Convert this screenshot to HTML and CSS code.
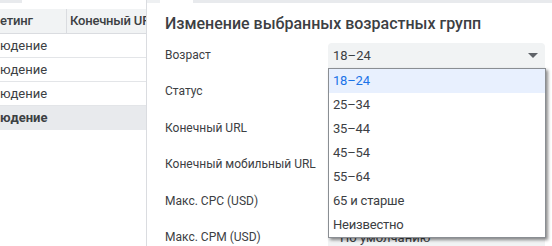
FILE: index.html
```html
<!DOCTYPE html>
<html lang="ru">
<head>
<meta charset="utf-8">
<link rel="stylesheet" href="styles.css">
</head>
<body>
<div class="app">
  <div class="left">
    <div class="left-top"><span class="left-tab"></span></div>
    <div class="table">
      <div class="row head">
        <div class="cell c1">етинг</div>
        <div class="cell c2">Конечный URL</div>
      </div>
      <div class="row"><div class="cell c1">юдение</div><div class="cell c2"></div></div>
      <div class="row"><div class="cell c1">юдение</div><div class="cell c2"></div></div>
      <div class="row"><div class="cell c1">юдение</div><div class="cell c2"></div></div>
      <div class="row sel"><div class="cell c1">юдение</div><div class="cell c2"></div></div>
    </div>
  </div>
  <div class="right">
    <div class="tabs"><span class="t1"></span><span class="t2"></span><span class="t3"></span></div>
    <div class="content">
      <h2 class="title">Изменение выбранных возрастных групп</h2>
      <div class="form">
        <div class="label">Возраст</div>
        <div class="field select">
          <span>18–24</span>
          <svg class="arrow" width="10" height="5" viewBox="0 0 10 5"><path d="M0 0h10L5 5z" fill="#5f6368"/></svg>
          <ul class="menu">
            <li class="active">18–24</li>
            <li>25–34</li>
            <li>35–44</li>
            <li>45–54</li>
            <li>55–64</li>
            <li>65 и старше</li>
            <li>Неизвестно</li>
          </ul>
        </div>
        <div class="label">Статус</div>
        <div class="field select"></div>
        <div class="label">Конечный URL</div>
        <div class="field input"></div>
        <div class="label">Конечный мобильный URL</div>
        <div class="field input"></div>
        <div class="label">Макс. CPC (USD)</div>
        <div class="field select"></div>
        <div class="label">Макс. CPM (USD)</div>
        <div class="field select"><span class="pad">По умолчанию</span></div>
      </div>
    </div>
  </div>
</div>
</body>
</html>
```

FILE: styles.css
```css
* { box-sizing: border-box; }
html, body {
  margin: 0;
  padding: 0;
  width: 552px;
  height: 246px;
  overflow: hidden;
  background: #fff;
  font-family: Roboto, "Liberation Sans", Arial, sans-serif;
  color: #3c4043;
}
.app {
  display: flex;
  height: 246px;
}
.left {
  width: 147px;
  flex: none;
  border-right: 1px solid #dadce0;
  overflow: hidden;
}
.left-top {
  height: 9px;
}
.left-tab {
  display: block;
  width: 22px;
  height: 3px;
  background: #e8eaed;
}
.table {
  width: 146px;
}
.row {
  display: flex;
  height: 24px;
  border-bottom: 1px solid #e3e5e8;
  font-size: 13px;
  line-height: 23px;
}
.row.head {
  height: 25px;
  background: #f1f3f4;
  font-weight: 500;
  line-height: 24px;
  border-bottom: 1px solid #dadce0;
  letter-spacing: -0.2px;
}
.row.sel {
  background: #e8eaed;
  font-weight: 700;
  border-bottom: none;
}
.cell {
  white-space: nowrap;
  overflow: hidden;
}
.c1 {
  width: 67px;
  flex: none;
}
.head .c1 {
  border-right: 1px solid #dadce0;
}
.c2 {
  flex: 1;
  padding-left: 3px;
}
.right {
  flex: 1;
  min-width: 0;
}
.tabs {
  display: flex;
  height: 3px;
}
.tabs .t1 { width: 13px; background: #eef0f2; }
.tabs .t2 { width: 33px; background: #fff; }
.tabs .t3 { flex: 1; background: #e8eaed; }
.content {
  padding: 11px 0 0 18px;
}
.title {
  margin: 0;
  font-size: 16px;
  font-weight: 500;
  line-height: 20px;
  color: #3c4043;
}
.form {
  margin-top: 9px;
  display: grid;
  grid-template-columns: 163px 217px;
  grid-auto-rows: 25px;
  row-gap: 11.4px;
}
.label {
  font-size: 12px;
  line-height: 25px;
  white-space: nowrap;
}
.field {
  position: relative;
  font-size: 13px;
  line-height: 25px;
}
.select {
  background: #f1f3f4;
  border-radius: 4px 4px 0 0;
  padding-left: 5px;
}
.select .pad {
  padding-left: 7px;
}
.arrow {
  position: absolute;
  right: 7px;
  top: 10px;
}
.menu {
  position: absolute;
  top: 25px;
  left: 0;
  width: 218px;
  margin: 0;
  padding: 0;
  list-style: none;
  background: #fff;
  border: 1px solid #8a8e93;
  box-shadow: 2px 2px 3px rgba(0, 0, 0, 0.45);
  z-index: 5;
}
.menu li {
  height: 24px;
  line-height: 24px;
  padding-left: 4px;
  font-size: 13px;
  letter-spacing: -0.2px;
  color: #3c4043;
}
.menu li.active {
  background: #e8f0fe;
  color: #1a73e8;
}
```
